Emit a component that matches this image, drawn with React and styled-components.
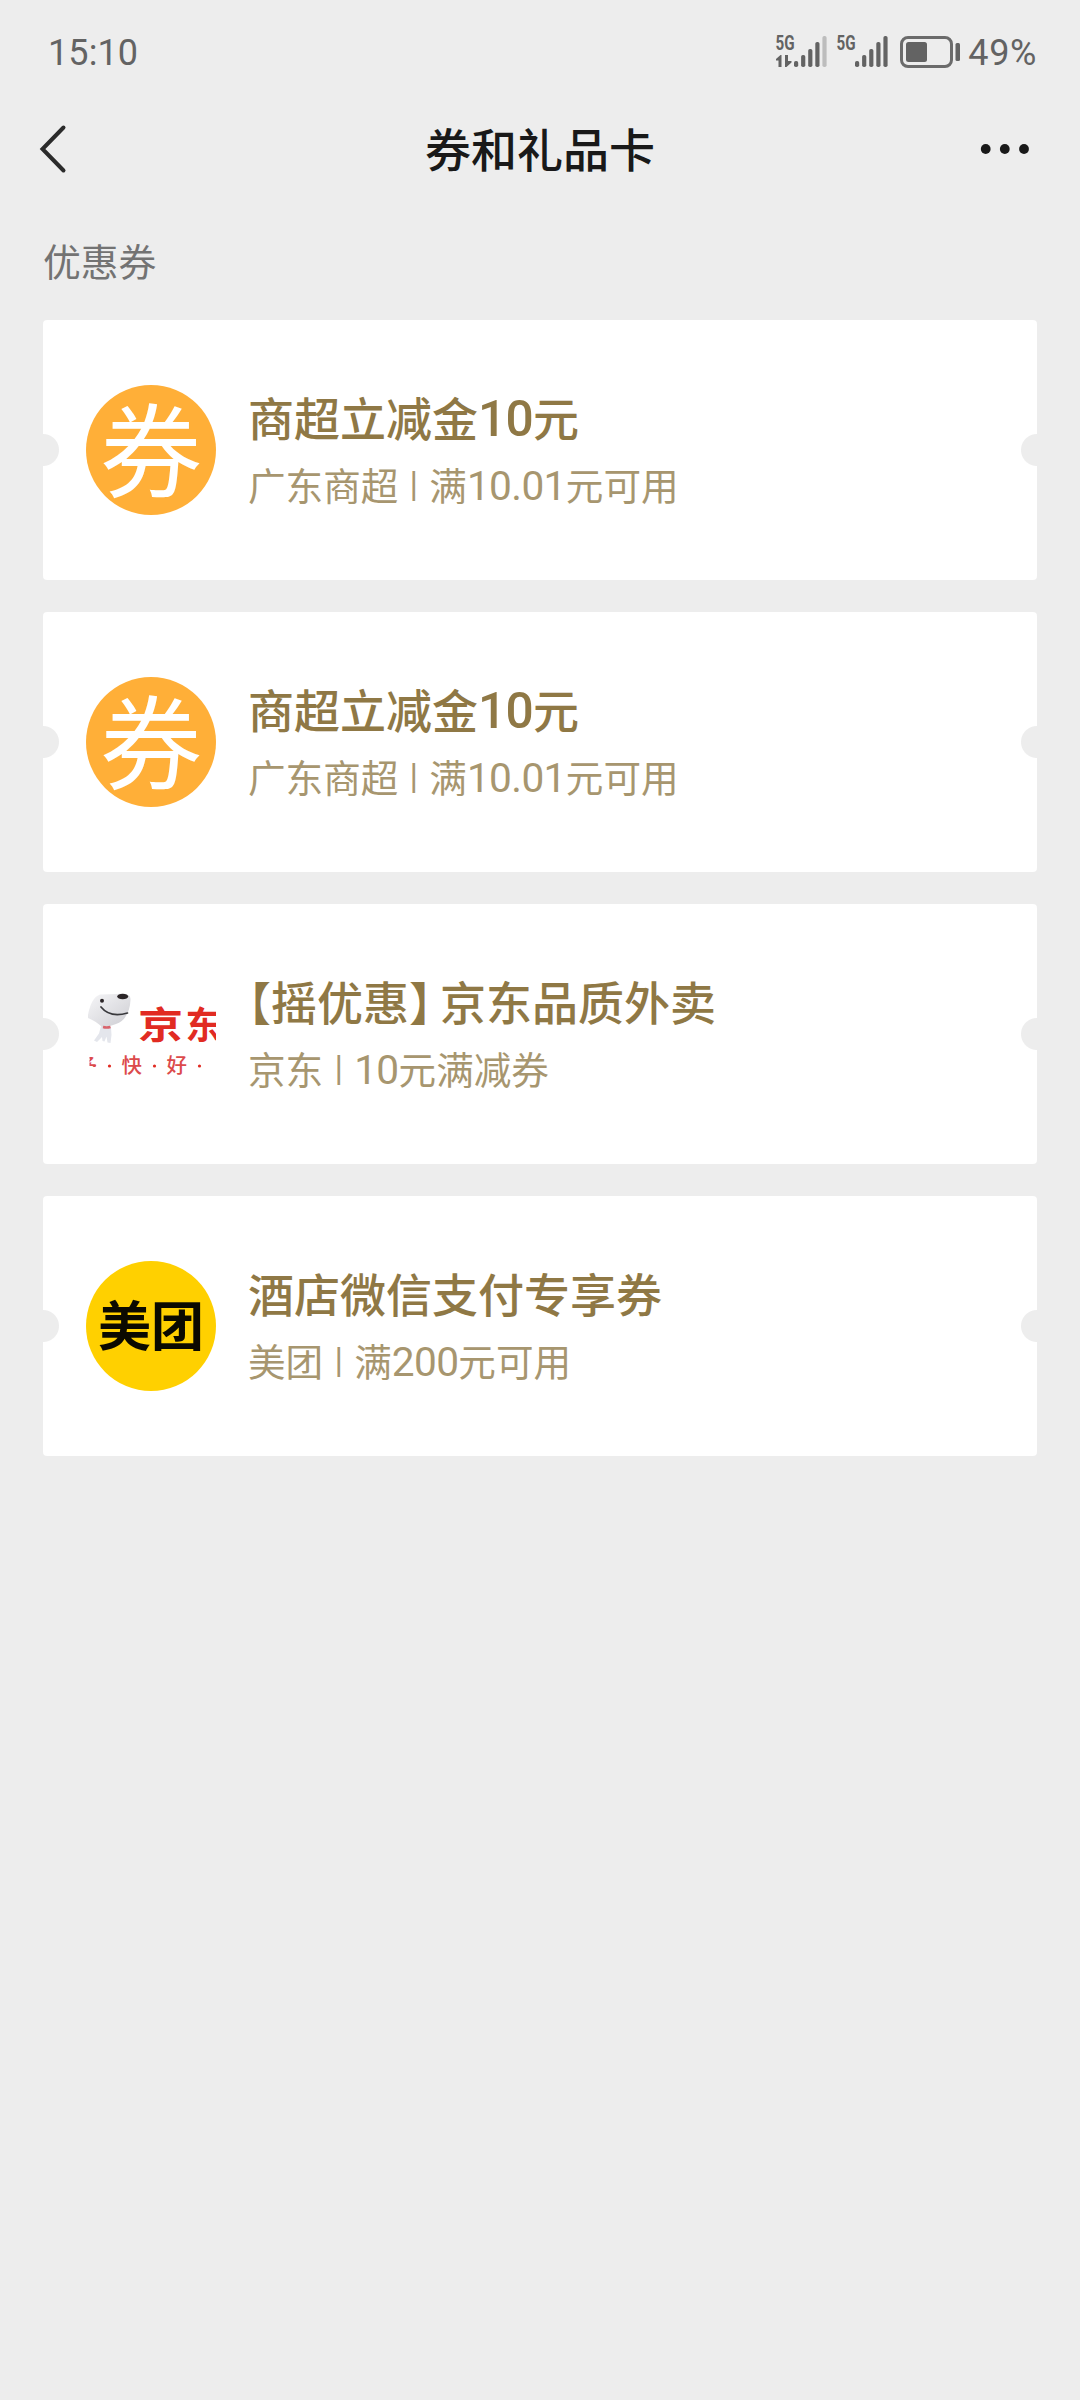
import React from "react";
import styled, { createGlobalStyle } from "styled-components";

const GlobalStyle = createGlobalStyle`
  body {
    margin: 0;
    background-color: #ededed;
    font-family: "Noto Sans CJK SC", sans-serif;
  }
`;

const Page = styled.div`
  width: 1080px;
  min-height: 2400px;
  background-color: #ededed;
`;

const StatusBar = styled.div`
  display: flex;
  justify-content: space-between;
  align-items: center;
  height: 104px;
  padding: 1px 43px 0 48px;
  box-sizing: border-box;
  font-family: Roboto, sans-serif;
  font-size: 36px;
  color: #636363;
`;

const Clock = styled.span`
  letter-spacing: 0.1px;
`;

const StatusIcons = styled.div`
  display: flex;
  align-items: center;
`;

const Battery = styled.span`
  width: 70px;
  text-align: right;
  letter-spacing: 0.6px;
`;

const NavBar = styled.div`
  display: grid;
  grid-template-columns: 120px 1fr 120px;
  align-items: center;
  height: 90px;
`;

const NavTitle = styled.h1`
  margin: 0;
  padding-bottom: 4px;
  text-align: center;
  font-size: 46px;
  line-height: 60px;
  font-weight: 500;
  color: #191919;
`;

const SectionTitle = styled.h2`
  margin: 0;
  padding: 39px 43px 0;
  height: 126px;
  box-sizing: border-box;
  font-size: 37.8px;
  line-height: 54px;
  font-weight: 400;
  color: #737373;
`;

const CouponList = styled.div`
  display: flex;
  flex-direction: column;
  gap: 32px;
  padding: 0 43px;
`;

const Card = styled.div`
  display: flex;
  align-items: center;
  gap: 32px;
  height: 260px;
  padding: 0 43px;
  box-sizing: border-box;
  border-radius: 4px;
  background: radial-gradient(circle at 0 50%, #ededed 15.5px, transparent 16.5px),
    radial-gradient(circle at 100% 50%, #ededed 15.5px, transparent 16.5px), #fff;
`;

const Logo = styled.div`
  display: flex;
  align-items: center;
  justify-content: center;
  flex: none;
  width: 130px;
  height: 130px;
  border-radius: ${(props) => (props.$square ? "0" : "50%")};
  background-color: ${(props) => props.$color || "transparent"};
`;

const Info = styled.div`
  display: flex;
  flex-direction: column;
  gap: 11px;
  padding-bottom: 4px;
  white-space: pre;
`;

const Name = styled.div`
  height: 60px;
  line-height: 60px;
  font-size: 46px;
  font-weight: 500;
  color: #8f7845;
`;

const Detail = styled.div`
  height: 54px;
  line-height: 54px;
  font-size: 37.6px;
  color: #a7966f;
`;

const Digits = styled.span`
  font-family: Roboto, sans-serif;
  font-size: 1.08em;
  line-height: 1;
  letter-spacing: -0.015em;
`;

const Bracket = styled.span`
  display: inline-block;
  width: ${(props) => props.$width}px;
  font-feature-settings: "halt";
`;

const Divider = styled.span`
  display: inline-block;
  width: 31px;
  text-align: center;
  font-family: Roboto, sans-serif;
  font-size: 35px;
  line-height: 1;
  vertical-align: 4px;
`;

const splitText = (text) =>
  text.split(/([\d.]+|[【】])/).map((part, i) => {
    if (part === "【") return <Bracket key={i} $width={23}>{part}</Bracket>;
    if (part === "】") return <Bracket key={i} $width={31}>{part}</Bracket>;
    if (/^[\d.]+$/.test(part)) return <Digits key={i}>{part}</Digits>;
    return part;
  });

function Signal({ x, level, arrows }) {
  return (
    <g transform={`translate(${x} 3)`}>
      <text
        transform="translate(-0.5 14.5) scale(0.78 1)"
        fontFamily="Roboto, sans-serif"
        fontWeight="700"
        fontSize="19.5"
      >
        5G
      </text>
      {arrows && (
        <path d="M5.5 20v12h-3v-6.5H0v-1.5l4.5-4zM9 20v12h1.5l5-4.5v-1.500h-3.500v-6z" />
      )}
      {[6, 12, 18, 25, 31].map((h, i) => (
        <rect
          key={h}
          x={18 + i * 7.1}
          y={32 - h}
          width="4.2"
          height={h}
          rx="1.8"
          fill={i < level ? "#636363" : "#bdbdbd"}
        />
      ))}
    </g>
  );
}

function StatusGraphics() {
  return (
    <svg width="192" height="42" viewBox="0 0 192 42" fill="#636363">
      <Signal x={1} level={4} arrows />
      <Signal x={62} level={5} />
      <rect x="126.5" y="5.5" width="50" height="29" rx="6.5" fill="none" stroke="#6b6b6b" strokeWidth="3" />
      <rect x="131" y="10" width="21" height="20" rx="2.5" />
      <rect x="180.5" y="11" width="4.5" height="18" rx="1.5" />
    </svg>
  );
}

function JdLogo() {
  return (
    <svg width="130" height="130" viewBox="0 0 130 130">
      <defs>
        <linearGradient id="dog" x1="0" y1="0" x2="1" y2="1">
          <stop offset="0" stopColor="#f6f6f8" />
          <stop offset="1" stopColor="#cdcdd2" />
        </linearGradient>
        <clipPath id="slogan">
          <rect x="3.5" y="87" width="7" height="11" />
        </clipPath>
      </defs>
      <path d="M15 57l10 1 .5 8-1 8-3-.5-1-6-2 5-2-.5-.5-4-5 5-3-1.5 5-7z" fill="#e4e6ec" />
      <path d="M2 46C4 36 7 28 14 25.5l17-.5c9-1 14 0 13.500 6C44 43 39 52 30 55c-5 2-10 3-14 3C12 54 7 51 2 49z" fill="url(#dog)" />
      <ellipse cx="36.7" cy="27.5" rx="5.5" ry="2.8" fill="#2b2527" />
      <circle cx="16" cy="31.7" r="2" fill="#2b2527" />
      <path d="M15 38c6 7.500 16 9 26.500 6" fill="none" stroke="#39393c" strokeWidth="1.7" strokeLinecap="round" />
      <path d="M17 58q3.500 1 7.500 0" fill="none" stroke="#d8646c" strokeWidth="2.4" />
      <g fill="#e12b22" fontFamily="'Noto Sans CJK SC', sans-serif">
        <g fontSize="43" fontWeight="700">
          <text transform="translate(52 70) scale(1.05 0.87)">京</text>
          <text transform="translate(99.5 70) scale(0.82 0.87)">东</text>
        </g>
        <g fontSize="20.5" fontWeight="500" fill="#dc4a4b">
          <text x="-9" y="103.5" clipPath="url(#slogan)">多</text>
          <text x="35.5" y="103.5">快</text>
          <text x="80.5" y="103.5">好</text>
        </g>
        <circle cx="23.5" cy="97" r="1.6" />
        <circle cx="68.500" cy="97" r="1.6" />
        <circle cx="113.500" cy="97" r="1.6" />
      </g>
    </svg>
  );
}

const QuanText = styled.span`
  height: 130px;
  margin-top: -8px;
  font-size: 102px;
  line-height: 130px;
  color: #fff;
`;

const MeituanText = styled.span`
  height: 130px;
  margin-top: -6px;
  font-size: 53px;
  line-height: 130px;
  font-weight: 700;
  color: #0b0a00;
`;

const logos = {
  quan: (
    <Logo $color="#ffaf38">
      <QuanText>券</QuanText>
    </Logo>
  ),
  jd: (
    <Logo $square>
      <JdLogo />
    </Logo>
  ),
  meituan: (
    <Logo $color="#ffd000">
      <MeituanText>美团</MeituanText>
    </Logo>
  ),
};

const coupons = [
  { id: 1, logo: "quan", name: "商超立减金10元", shop: "广东商超", rule: "满10.01元可用" },
  { id: 2, logo: "quan", name: "商超立减金10元", shop: "广东商超", rule: "满10.01元可用" },
  { id: 3, logo: "jd", name: "【摇优惠】京东品质外卖", shop: "京东", rule: "10元满减券" },
  { id: 4, logo: "meituan", name: "酒店微信支付专享券", shop: "美团", rule: "满200元可用" },
];

function App() {
  return (
    <Page>
      <GlobalStyle />
      <StatusBar>
        <Clock>15:10</Clock>
        <StatusIcons>
          <StatusGraphics />
          <Battery>49%</Battery>
        </StatusIcons>
      </StatusBar>
      <NavBar>
        <svg width="120" height="90" viewBox="0 0 120 90">
          <path d="M63.5 23.5L42.5 45l21 21.5" fill="none" stroke="#2b2b2b" strokeWidth="4" strokeLinecap="round" />
        </svg>
        <NavTitle>券和礼品卡</NavTitle>
        <svg width="120" height="90" viewBox="0 0 120 90" fill="#191919">
          <circle cx="25.7" cy="45" r="4.9" />
          <circle cx="44.8" cy="45" r="4.9" />
          <circle cx="64" cy="45" r="4.9" />
        </svg>
      </NavBar>
      <SectionTitle>优惠券</SectionTitle>
      <CouponList>
        {coupons.map((coupon) => (
          <Card key={coupon.id}>
            {logos[coupon.logo]}
            <Info>
              <Name>{splitText(coupon.name)}</Name>
              <Detail>
                {coupon.shop}
                <Divider>|</Divider>
                {splitText(coupon.rule)}
              </Detail>
            </Info>
          </Card>
        ))}
      </CouponList>
    </Page>
  );
}

export default App;
